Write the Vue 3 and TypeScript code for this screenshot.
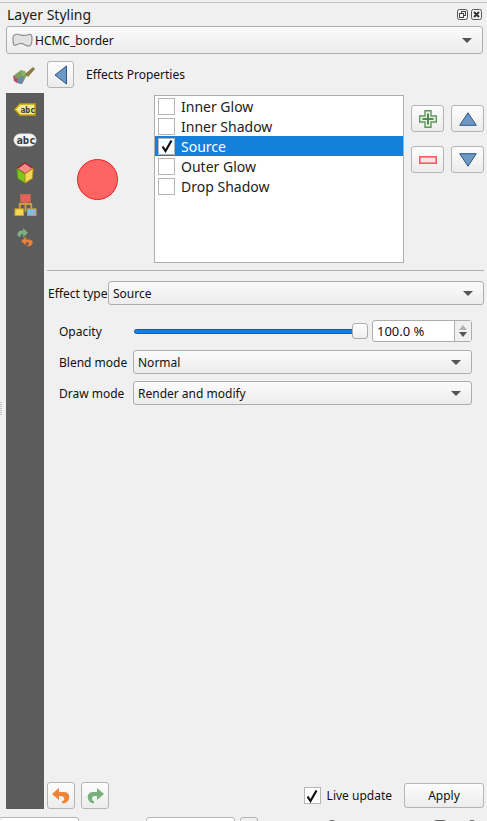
<script setup lang="ts">
const effects = [
  { name: 'Inner Glow', on: false },
  { name: 'Inner Shadow', on: false },
  { name: 'Source', on: true },
  { name: 'Outer Glow', on: false },
  { name: 'Drop Shadow', on: false },
]
</script>

<template>
  <div class="root">
    <div class="grip"></div>
    <div class="titlebar">
      <span class="title">Layer Styling</span>
      <div class="winbtns">
        <svg width="11" height="11" viewBox="0 0 11 11"><rect x=".5" y=".5" width="10" height="10" rx="2" fill="#f4f4f4" stroke="#555"/><rect x="4.500" y="2.500" width="4" height="4" fill="none" stroke="#444"/><rect x="2.500" y="4.500" width="4" height="4" fill="#f4f4f4" stroke="#444"/></svg>
        <svg width="11" height="11" viewBox="0 0 11 11"><rect x=".5" y=".5" width="10" height="10" rx="2" fill="#f4f4f4" stroke="#555"/><path d="M3 3l5 5M8 3l-5 5" stroke="#333" stroke-width="2"/></svg>
      </div>
    </div>
    <div class="combo layer-combo">
      <svg width="21" height="14" viewBox="0 0 21 14"><path d="M1 5C1 1.500 4 .8 7 1.500s5 1.500 8 .5 5-1.500 5 3.500-1 8-4 7.500-5-3-8-2.500-5 3-6 1.500S1 8 1 5z" fill="#e2e2e2" stroke="#8e8e8e" stroke-width="1.200"/></svg>
      <span>HCMC_border</span>
      <i class="arrow"></i>
    </div>
    <div class="header">
      <svg class="brush" width="24" height="22" viewBox="0 0 24 22">
        <path d="M1 12l8-6 6 5-5 9-5-1z" fill="#7ba05b"/>
        <path d="M1 12l5 3-1 4-3-2z" fill="#c2476a"/>
        <path d="M6 15l4-3 2 2-2 6-5-1z" fill="#6b87a8"/>
        <path d="M9 6l4 1 2 4-5 1z" fill="#8fae6a"/>
        <path d="M13 10l8-7 2 2-7 8z" fill="#8a7a45"/>
      </svg>
      <button class="btn back">
        <svg width="14" height="20" viewBox="0 0 14 20"><path d="M12.500 1v18L1 10z" fill="#6c98c6" stroke="#2f5680"/></svg>
      </button>
      <span class="panel-title">Effects Properties</span>
    </div>
    <div class="main">
      <nav class="sidebar">
        <svg width="22" height="13" viewBox="0 0 22 13"><path d="M1 6.500L6 1h15v11H6z" fill="#f5e79a" stroke="#c9a400" stroke-width="1.500"/><text x="6.500" y="9.500" class="icon-text" fill="#333">abc</text></svg>
        <svg class="abc2" width="24" height="14" viewBox="0 0 24 14"><rect x="1" y="1" width="22" height="12" rx="6" fill="#f6f6f6" stroke="#dfe6ee"/><text x="3.500" y="10.500" class="icon-text large" fill="#333a44">abc</text></svg>
        <svg class="cube" width="20" height="22" viewBox="0 0 22 24"><path d="M11 1l9 6-9 6-9-6z" fill="#f08a8a" stroke="#a01818" stroke-width="1.200"/><path d="M2 7l9 6v10l-8-5z" fill="#7cc61e" stroke="#5a9010"/><path d="M20 7l-9 6v10l8-5z" fill="#f2d65a" stroke="#b89a18"/></svg>
        <svg class="tree" width="23" height="24" viewBox="0 0 24 24"><path d="M6 18v-7h12v7M12 8v11" fill="none" stroke="#d09a3e" stroke-width="2"/><rect x="7" y="1" width="10" height="8" fill="#e86060" stroke="#c86a50"/><rect x="1" y="16" width="9" height="7" fill="#f6d84e" stroke="#c8a030"/><rect x="14" y="16" width="9" height="7" fill="#8db8e4" stroke="#c89a40"/></svg>
        <svg class="undo" width="20" height="21" viewBox="0 0 20 22"><path d="M2 9c0-4 3-6 6-5V1l5 5-5 5V7C6 7 5 9 5 11z" fill="#7fb07f"/><path d="M18 16c0 3-3 5-6 4v-1c2 0 3-2 1-3h-2v3l-5-4 5-5v3h3c2 0 4 1 4 3z" fill="#e8803a"/></svg>
      </nav>
      <div class="content">
        <div class="top">
          <div class="preview"><div class="circle"></div></div>
          <ul class="list">
            <li v-for="e in effects" :key="e.name" :class="{ sel: e.on }">
              <span class="check"><svg v-if="e.on" width="14" height="14" viewBox="0 0 14 14"><path d="M2.500 7.500L5.500 12 11.500 1.500" fill="none" stroke="#111" stroke-width="2.200"/></svg></span>
              <span>{{ e.name }}</span>
            </li>
          </ul>
          <div class="tools">
            <button class="btn tool"><svg width="18" height="18" viewBox="0 0 18 18"><path d="M6 .7h6v5.300h5.300v6H12v5.300H6V12H.7V6H6z" fill="#e9f2e4" stroke="#5f965f" stroke-width="1.400"/><path d="M9 3.500v11M3.500 9h11" stroke="#4f8a4f" stroke-width="2"/></svg></button>
            <button class="btn tool"><svg width="18" height="14" viewBox="0 0 18 14"><path d="M9 .8L17.300 13.300H.7z" fill="#6c98c6" stroke="#2f5680"/></svg></button>
            <button class="btn tool"><svg width="18" height="8" viewBox="0 0 18 8"><rect x=".8" y=".8" width="16.400" height="6.400" fill="#fde3e3" stroke="#f25c5c" stroke-width="1.600"/></svg></button>
            <button class="btn tool"><svg width="18" height="14" viewBox="0 0 18 14"><path d="M9 13.200L17.300 .7H.7z" fill="#6c98c6" stroke="#2f5680"/></svg></button>
          </div>
        </div>
        <hr class="divider" />
        <div class="effect-row">
          <label>Effect type</label>
          <div class="combo grow"><span>Source</span><i class="arrow"></i></div>
        </div>
        <div class="form">
          <label>Opacity</label>
          <div class="opacity">
            <div class="slider"><div class="track"></div><div class="thumb"></div></div>
            <div class="spin">
              <span class="value">100.0 %</span>
              <div class="steps"><i class="up"></i><i class="down"></i></div>
            </div>
          </div>
          <label>Blend mode</label>
          <div class="combo"><span>Normal</span><i class="arrow"></i></div>
          <label>Draw mode</label>
          <div class="combo"><span>Render and modify</span><i class="arrow"></i></div>
        </div>
      </div>
    </div>
    <div class="footer">
      <button class="btn foot"><svg width="20" height="20" viewBox="0 0 20 20"><path d="M8 2v4h5c4 0 6 3 5 7-1 3-4 5-7 4v-2c2 0 3-2 2-3-1-2-2-2-5-2v4L1 8z" fill="#ee8436"/></svg></button>
      <button class="btn foot"><svg width="20" height="20" viewBox="0 0 20 20"><path d="M12 2v4H8c-4 0-6 3-5 7 1 3 4 5 6 4v-2c-2 0-2-2-2-3 1-2 2-2 5-2v4l7-6z" fill="#78b07c"/></svg></button>
      <label class="live">
        <span class="check"><svg width="14" height="14" viewBox="0 0 14 14"><path d="M2.500 7.500L5.500 12 11.500 1.500" fill="none" stroke="#111" stroke-width="2.200"/></svg></span>
        Live update
      </label>
      <button class="btn apply">Apply</button>
    </div>
    <div class="statusbar">
      <div class="stub s1"></div>
      <div class="stub s2"></div>
      <div class="stub s3"></div>
      <div class="tip t1"></div>
      <div class="tip t2"></div>
      <div class="tip t3"></div>
    </div>
  </div>
</template>

<style>
html, body { margin: 0; overflow: hidden; background: #f0f0f0; }
</style>

<style scoped>
.root {
  position: relative;
  width: 487px;
  height: 821px;
  overflow: hidden;
  box-sizing: border-box;
  background: #f0f0f0;
  font-family: "Noto Sans", "Open Sans", sans-serif;
  font-size: 12px;
  color: #111;
  display: flex;
  flex-direction: column;
  padding-top: 2px;
}
.grip {
  position: absolute;
  left: 0;
  top: 402px;
  width: 2px;
  height: 13px;
  background: repeating-linear-gradient(#c4c4c4 0 1px, transparent 1px 2px);
}
.titlebar {
  height: 23px;
  flex: none;
  border-top: 1px solid #c4c4c4;
  margin-bottom: 1px;
  display: flex;
  align-items: center;
  justify-content: space-between;
  padding: 0 5px 0 7px;
  box-sizing: border-box;
}
.title { font-size: 14px; color: #1a1a1a; }
.winbtns { display: flex; gap: 3px; }
.winbtns svg { display: block; }
.combo {
  height: 24px;
  box-sizing: border-box;
  border: 1px solid #adadad;
  border-radius: 3px;
  background: linear-gradient(#fbfbfb, #ececec);
  display: flex;
  align-items: center;
  padding: 0 4px;
  position: relative;
}
.combo .arrow {
  margin-left: auto;
  margin-right: 6px;
  border: 5px solid transparent;
  border-top: 5px solid #555;
  border-bottom: 0;
}
.layer-combo {
  height: 28px;
  margin: 0 4px 0 6px;
  padding-left: 5px;
  gap: 2px;
  font-size: 12px;
}
.header {
  display: flex;
  align-items: center;
  height: 27px;
  margin-top: 7px;
  padding-left: 12px;
}
.brush { margin-right: 11px; }
.panel-title { margin-left: 12px; }
.btn {
  border: 1px solid #b4b4b4;
  border-radius: 3px;
  background: linear-gradient(#fdfdfd, #ececec);
  padding: 0;
  display: flex;
  align-items: center;
  justify-content: center;
  font-family: inherit;
  color: inherit;
  box-sizing: border-box;
}
.back { width: 27px; height: 27px; }
.main {
  flex: 1;
  min-height: 0;
  display: flex;
  margin: 5px 0 0 6px;
}
.sidebar {
  width: 38px;
  flex: none;
  background: #5c5c5c;
  display: flex;
  flex-direction: column;
  align-items: center;
  padding-top: 10px;
  box-sizing: border-box;
}
.abc2 { margin-top: 17px; }
.cube { margin-top: 15px; }
.tree { margin-top: 9px; }
.undo { margin-top: 10px; }
.icon-text { font: bold 8px "DejaVu Sans Mono", monospace; }
.icon-text.large { font-size: 10.500px; }
.content { flex: 1; min-width: 0; padding: 2px 3px 0 3px; }
.top { display: flex; height: 168px; }
.preview {
  width: 107px;
  flex: none;
  display: flex;
  align-items: center;
  justify-content: center;
  padding-right: 7px;
  box-sizing: border-box;
}
.circle {
  width: 41px;
  height: 41px;
  box-sizing: border-box;
  border-radius: 50%;
  background: #ff6464;
  border: 1px solid #f01e1e;
}
.list {
  width: 250px;
  height: 168px;
  flex: none;
  box-sizing: border-box;
  border: 1px solid #aeaeae;
  background: #fff;
  margin: 0;
  padding: 0;
  list-style: none;
  font-size: 14px;
}
.list li {
  height: 20px;
  display: flex;
  align-items: center;
  gap: 6px;
  padding-left: 3px;
  color: #222;
}
.list li.sel { background: #1580db; color: #fff; }
.check {
  width: 17px;
  height: 17px;
  box-sizing: border-box;
  border: 1px solid #b5b5b5;
  background: #fff;
  display: flex;
  align-items: center;
  justify-content: center;
  flex: none;
}
.tools {
  display: grid;
  grid-template-columns: 33px 33px;
  grid-auto-rows: 27px;
  column-gap: 7px;
  row-gap: 14px;
  margin: 10px 0 0 7px;
}
.tool { width: 33px; height: 27px; }
.divider {
  border: 0;
  border-top: 1px solid #b0b0b0;
  margin: 7px 0 0 0;
}
.effect-row {
  display: flex;
  align-items: center;
  margin-top: 10px;
  padding-left: 1px;
}
.effect-row label { width: 60px; flex: none; white-space: nowrap; }
.grow { flex: 1; }
.form {
  display: grid;
  grid-template-columns: 74px 339px;
  grid-auto-rows: 24px;
  row-gap: 7px;
  margin-top: 14px;
  padding-left: 12px;
  align-items: center;
}
.opacity { display: flex; align-items: center; gap: 4px; height: 24px; }
.slider { width: 234px; margin-left: 1px; height: 16px; position: relative; display: flex; align-items: center; flex: none; }
.track {
  width: 100%;
  height: 5px;
  border-radius: 3px;
  background: #1580db;
  border: 1px solid #0c5fa8;
  box-sizing: border-box;
}
.thumb {
  position: absolute;
  right: 0;
  top: 0;
  width: 16px;
  height: 16px;
  box-sizing: border-box;
  border: 1px solid #adadad;
  border-radius: 3px;
  background: linear-gradient(#fff, #ededed);
}
.spin {
  width: 100px;
  height: 22px;
  box-sizing: border-box;
  border: 1px solid #adadad;
  border-radius: 3px;
  background: #fff;
  display: flex;
  align-items: center;
}
.value { padding-left: 4px; flex: 1; font-size: 13px; }
.steps {
  width: 16px;
  height: 100%;
  border-left: 1px solid #adadad;
  background: #f0f0f0;
  display: flex;
  flex-direction: column;
  align-items: center;
  justify-content: center;
  gap: 2px;
}
.steps i { border: 4.500px solid transparent; }
.steps .up { border-bottom: 5px solid #b0b0b0; border-top: 0; }
.steps .down { border-top: 5px solid #555; border-bottom: 0; }
.footer {
  display: flex;
  align-items: center;
  height: 27px;
  margin: -27px 3px 0 47px;
  gap: 6px;
  position: relative;
}
.foot { width: 28px; height: 27px; }
.live { margin-left: auto; display: flex; align-items: center; gap: 6px; margin-right: 6px; }
.apply { width: 80px; height: 25px; font-size: 12px; }
.statusbar {
  height: 12px;
  flex: none;
  position: relative;
  display: flex;
  padding-top: 8px;
  box-sizing: border-box;
}
.stub { border: 1px solid #b4b4b4; border-radius: 3px 3px 0 0; background: #fff; height: 10px; box-sizing: border-box; flex: none; }
.s1 { width: 80px; margin-left: -1px; }
.s2 { width: 89px; margin-left: 67px; }
.s3 { width: 18px; margin-left: 5px; background: #f0f0f0; }
.tip { height: 4px; margin-top: 3px; border-radius: 4px 4px 0 0; background: #666; flex: none; }
.t1 { width: 8px; margin-left: 70px; }
.t2 { width: 14px; margin-left: 97px; }
.t3 { width: 8px; margin-left: 21px; }
</style>
